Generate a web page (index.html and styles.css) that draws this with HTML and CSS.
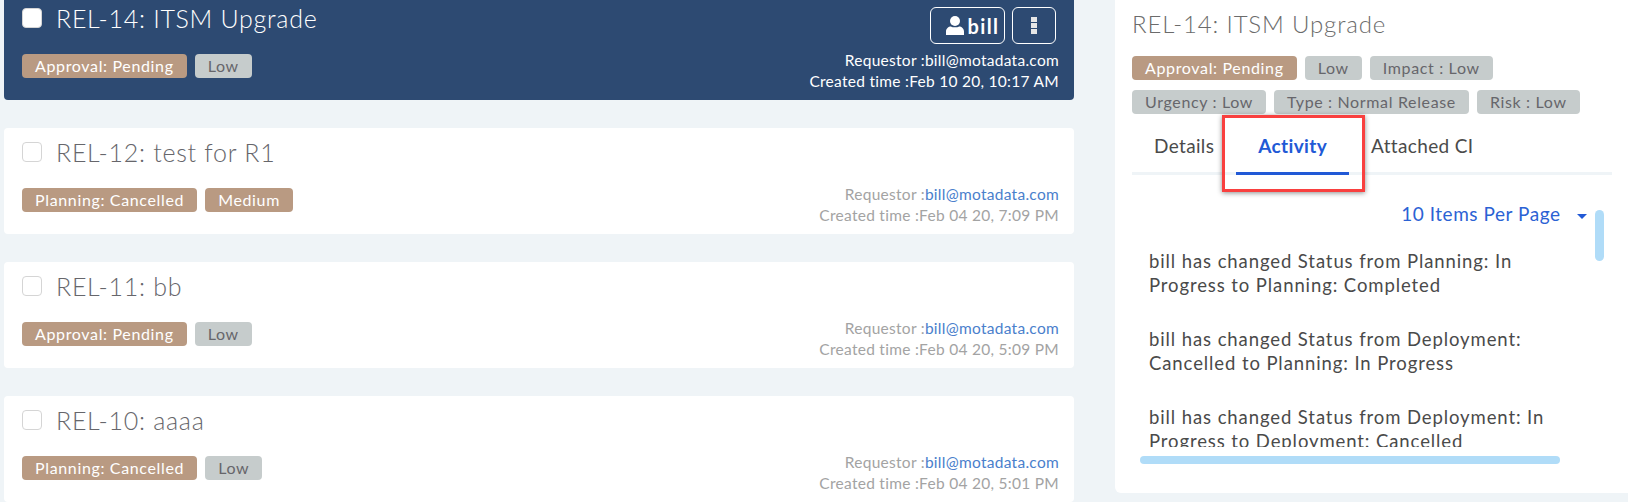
FILE: index.html
```html
<!DOCTYPE html>
<html lang="en">

<head>
    <meta charset="UTF-8">
    <meta name="viewport" content="width=device-width, initial-scale=1.0">
    <title>Releases</title>
    <link rel="stylesheet" href="styles.css">
</head>

<body>

    <div class="release-list">
        <!-- Selected release -->
        <div class="release-card active">
            <div class="card-main">
                <div class="card-title">
                    <span class="check"></span>
                    <span class="title-text">REL-14: ITSM Upgrade</span>
                </div>
                <div class="tags">
                    <span class="tag tan">Approval: Pending</span>
                    <span class="tag grey">Low</span>
                </div>
            </div>
            <div class="card-side">
                <div class="card-actions">
                    <button class="btn-user">
                        <svg class="user-icon" viewBox="0 0 18 19"><circle cx="9" cy="5" r="5"/><path d="M0 19V15.6C0 12.4 2.4 10.4 5 10.4C7 11.6 11 11.6 13 10.4C15.6 10.4 18 12.4 18 15.6V19Z"/></svg>
                        bill
                    </button>
                    <button class="btn-more"><span></span><span></span><span></span></button>
                </div>
                <div class="meta">Requestor :<span class="mail">bill@motadata.com</span></div>
                <div class="meta">Created time :Feb 10 20, 10:17 AM</div>
            </div>
        </div>

        <div class="release-card">
            <div class="card-main">
                <div class="card-title">
                    <span class="check"></span>
                    <span class="title-text">REL-12: test for R1</span>
                </div>
                <div class="tags">
                    <span class="tag tan">Planning: Cancelled</span>
                    <span class="tag tan">Medium</span>
                </div>
            </div>
            <div class="card-side">
                <div class="meta">Requestor :<span class="mail">bill@motadata.com</span></div>
                <div class="meta">Created time :Feb 04 20, 7:09 PM</div>
            </div>
        </div>

        <div class="release-card">
            <div class="card-main">
                <div class="card-title">
                    <span class="check"></span>
                    <span class="title-text">REL-11: bb</span>
                </div>
                <div class="tags">
                    <span class="tag tan">Approval: Pending</span>
                    <span class="tag grey">Low</span>
                </div>
            </div>
            <div class="card-side">
                <div class="meta">Requestor :<span class="mail">bill@motadata.com</span></div>
                <div class="meta">Created time :Feb 04 20, 5:09 PM</div>
            </div>
        </div>

        <div class="release-card">
            <div class="card-main">
                <div class="card-title">
                    <span class="check"></span>
                    <span class="title-text">REL-10: aaaa</span>
                </div>
                <div class="tags">
                    <span class="tag tan">Planning: Cancelled</span>
                    <span class="tag grey">Low</span>
                </div>
            </div>
            <div class="card-side">
                <div class="meta">Requestor :<span class="mail">bill@motadata.com</span></div>
                <div class="meta">Created time :Feb 04 20, 5:01 PM</div>
            </div>
        </div>
    </div>

    <!-- Detail panel -->
    <div class="detail-panel">
        <h2 class="detail-title">REL-14: ITSM Upgrade</h2>
        <div class="detail-tags">
            <span class="tag tan">Approval: Pending</span>
            <span class="tag grey">Low</span>
            <span class="tag grey">Impact : Low</span>
            <span class="tag grey">Urgency : Low</span>
            <span class="tag grey">Type : Normal Release</span>
            <span class="tag grey">Risk : Low</span>
        </div>
        <div class="tabs">
            <div class="tab">Details</div>
            <div class="tab selected">Activity</div>
            <div class="tab">Attached CI</div>
            <div class="callout"></div>
        </div>
        <div class="activity">
            <div class="per-page">10 Items Per Page <span class="caret"></span></div>
            <div class="activity-list">
                <p>bill has changed Status from Planning: In Progress to Planning: Completed</p>
                <p>bill has changed Status from Deployment: Cancelled to Planning: In Progress</p>
                <p>bill has changed Status from Deployment: In Progress to Deployment: Cancelled</p>
            </div>
            <div class="thumb-y"></div>
            <div class="thumb-x"></div>
        </div>
    </div>

</body>

</html>
```

FILE: styles.css
```css
body {
    font-family: "Lato", "Open Sans", sans-serif;
    background-color: #eff4f7;
    display: flex;
    align-items: flex-start;
    height: 502px;
    margin: 0;
    overflow: hidden;
}

.release-list {
    width: 1070px;
    margin: -6px 0 0 4px;
    display: flex;
    flex-direction: column;
    gap: 28px;
    flex-shrink: 0;
}

.release-card {
    height: 106px;
    box-sizing: border-box;
    background-color: #fff;
    border-radius: 4px;
    padding: 14px 15px 9px 18px;
    display: flex;
    justify-content: space-between;
    color: #66666b;
}

.release-card.active {
    background-color: #2d4a72;
    color: #fff;
}

.card-title {
    display: flex;
    align-items: center;
    gap: 14px;
    height: 20px;
}

.check {
    width: 20px;
    height: 20px;
    box-sizing: border-box;
    border: 1px solid #d5d5d5;
    border-radius: 4px;
    background-color: #fff;
}

.title-text {
    font-size: 25px;
    font-weight: 300;
    letter-spacing: 0.72px;
}

.tags {
    display: flex;
    gap: 8px;
    margin-top: 26px;
}

.tag {
    height: 24px;
    line-height: 24px;
    padding: 0 13px;
    border-radius: 4px;
    font-size: 16px;
    letter-spacing: 0.65px;
    white-space: nowrap;
}

.tag.tan {
    background-color: #b99a82;
    color: #fff;
}

.tag.grey {
    background-color: #c6cccc;
    color: #66666b;
}

.card-side {
    display: flex;
    flex-direction: column;
    justify-content: flex-end;
    align-items: flex-end;
}

.card-actions {
    display: flex;
    gap: 7px;
    margin: 0 3px 6px 0;
}

.card-actions button {
    height: 37px;
    background: none;
    border: 1px solid #fff;
    border-radius: 6px;
    color: #fff;
    font-family: inherit;
    cursor: pointer;
}

.btn-user {
    width: 75px;
    font-size: 20px;
    font-weight: 700;
    letter-spacing: 1.4px;
    display: flex;
    align-items: center;
    justify-content: center;
    gap: 4px;
    padding: 0 0 0 10px;
}

.user-icon {
    width: 18px;
    height: 19px;
    fill: #fff;
}

.btn-more {
    width: 44px;
    display: flex;
    flex-direction: column;
    align-items: center;
    justify-content: center;
    gap: 1.5px;
    padding: 0;
}

.btn-more span {
    width: 6px;
    height: 4.5px;
    background-color: #e6e6e6;
}

.meta {
    font-size: 15.5px;
    line-height: 20.5px;
    color: #a3a3a3;
    letter-spacing: 0.28px;
}

.meta .mail {
    color: #4a80cc;
}

.active .meta,
.active .meta .mail {
    color: #fff;
}

.detail-panel {
    flex: 1;
    height: 493px;
    margin-left: 41px;
    box-sizing: border-box;
    background-color: #fff;
    border-radius: 0 0 0 6px;
    padding: 10px 16px 0 17px;
}

.detail-title {
    margin: 0;
    font-size: 24px;
    line-height: 28px;
    font-weight: 300;
    letter-spacing: 0.85px;
    color: #6b6b6b;
}

.detail-tags {
    display: flex;
    flex-wrap: wrap;
    gap: 10px 8px;
    margin-top: 18px;
    width: 470px;
}

.tabs {
    position: relative;
    display: flex;
    align-items: flex-start;
    height: 58px;
    border-bottom: 3px solid #eff4f7;
}

.tab {
    box-sizing: border-box;
    height: 58px;
    font-size: 19px;
    line-height: 56px;
    letter-spacing: 0.35px;
    padding: 4px 22px 0;
    color: #4a4a4a;
}

.tab.selected {
    height: 61px;
    font-weight: 700;
    color: #2159d6;
    border-bottom: 3px solid #2159d6;
}

.callout {
    position: absolute;
    left: 90px;
    top: 1px;
    width: 143px;
    height: 77px;
    box-sizing: border-box;
    border: 3px solid #f9403f;
    box-shadow: 0 1px 5px rgba(0, 0, 0, 0.45);
}

.activity {
    position: relative;
    height: 318px;
}

.per-page {
    text-align: right;
    font-size: 19px;
    line-height: 24px;
    letter-spacing: 0.55px;
    color: #2b62d4;
    padding: 27px 25px 0 0;
}

.caret {
    display: inline-block;
    margin-left: 11px;
    vertical-align: middle;
    border-left: 5px solid transparent;
    border-right: 5px solid transparent;
    border-top: 5px solid #2159d6;
}

.activity-list {
    width: 420px;
    height: 198px;
    overflow: hidden;
    margin: 23px 0 0 17px;
    font-size: 18.5px;
    line-height: 24px;
    letter-spacing: 0.9px;
    color: #4a4a4a;
}

.activity-list p {
    margin: 0 0 30px;
}

.thumb-y {
    position: absolute;
    left: 463px;
    top: 35px;
    width: 9px;
    height: 51px;
    border-radius: 5px;
    background-color: #b0dcf8;
}

.thumb-x {
    position: absolute;
    left: 8px;
    top: 281px;
    width: 420px;
    height: 8px;
    border-radius: 4px;
    background-color: #b0dcf8;
}
```
